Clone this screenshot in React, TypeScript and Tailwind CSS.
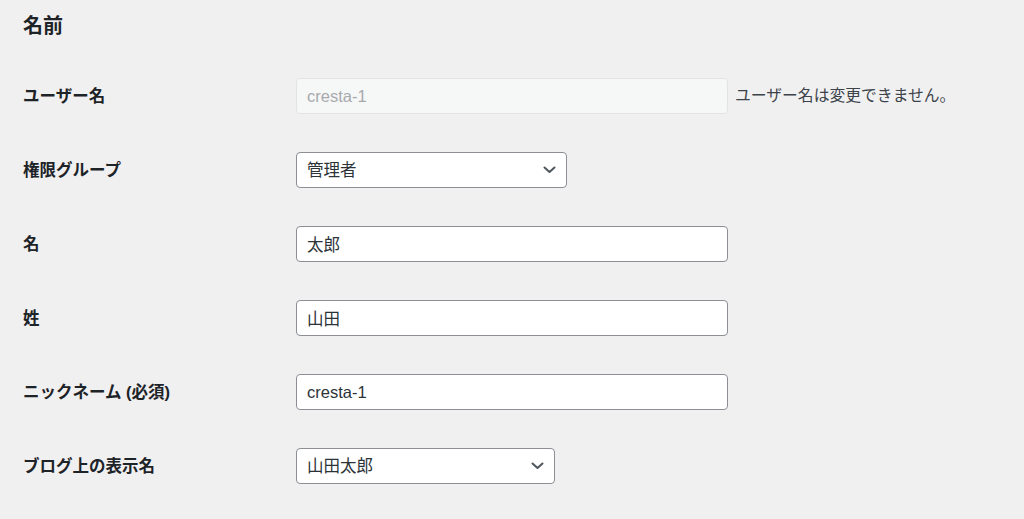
import React from "react";

const font = { fontFamily: '"Liberation Sans", "Noto Sans CJK JP", sans-serif' };

function Chevron() {
  return (
    <svg
      className="pointer-events-none absolute right-[11px] top-1/2 -translate-y-1/2"
      width="13"
      height="8"
      viewBox="0 0 13 8"
      fill="none"
    >
      <path d="M1.5 1.5 L6.5 6 L11.5 1.5" stroke="#50575e" strokeWidth="2" strokeLinecap="round" strokeLinejoin="round" />
    </svg>
  );
}

function Row({ label, children }: { label: React.ReactNode; children: React.ReactNode }) {
  return (
    <div className="flex h-[74px] items-center">
      <div className="w-[273px] shrink-0 text-[16.5px] font-bold text-[#1d2327]">{label}</div>
      <div className="flex items-center">{children}</div>
    </div>
  );
}

const inputCls =
  "h-[36px] w-[432px] rounded-[4px] border border-[#8c8f94] bg-white px-[10px] text-[16.5px] text-[#2c3338] outline-none";

export default function App() {
  return (
    <div className="min-h-screen bg-[#f0f0f1] pl-[23px] pt-[12px]" style={font}>
      <h2 className="h-[29px] text-[20px] font-bold leading-[29px] text-[#1d2327]">名前</h2>
      <div className="mt-[18px]">
        <Row label="ユーザー名">
          <input
            className="h-[36px] w-[432px] rounded-[4px] border border-[#e2e3e4] bg-[#f6f7f7] px-[10px] text-[16.5px] text-[#a7aaad] outline-none"
            value="cresta-1"
            disabled
            readOnly
          />
          <span className="ml-[7px] text-[15.8px] text-[#3c434a]">ユーザー名は変更できません。</span>
        </Row>
        <Row label="権限グループ">
          <div className="relative">
            <select
              className="h-[36px] w-[271px] appearance-none rounded-[4px] border border-[#8c8f94] bg-white px-[10px] text-[16.5px] text-[#2c3338] outline-none"
              defaultValue="admin"
            >
              <option value="admin">管理者</option>
            </select>
            <Chevron />
          </div>
        </Row>
        <Row label="名">
          <input className={inputCls} defaultValue="太郎" />
        </Row>
        <Row label="姓">
          <input className={inputCls} defaultValue="山田" />
        </Row>
        <Row label="ニックネーム (必須)">
          <input className={inputCls} defaultValue="cresta-1" />
        </Row>
        <Row label="ブログ上の表示名">
          <div className="relative">
            <select
              className="h-[36px] w-[259px] appearance-none rounded-[4px] border border-[#8c8f94] bg-white px-[10px] text-[16.5px] text-[#2c3338] outline-none"
              defaultValue="yt"
            >
              <option value="yt">山田太郎</option>
            </select>
            <Chevron />
          </div>
        </Row>
      </div>
    </div>
  );
}
